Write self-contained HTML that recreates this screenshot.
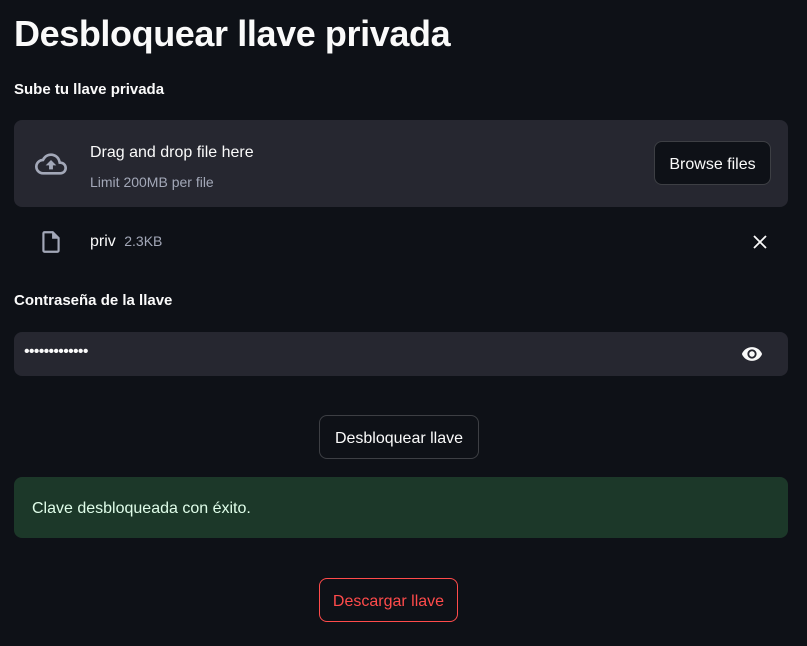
<!DOCTYPE html>
<html><head><meta charset="utf-8"><style>
*{box-sizing:border-box;margin:0;padding:0}
body{width:807px;height:646px;background:#0e1117;color:#fafafa;font-family:"Liberation Sans",sans-serif;position:relative;overflow:hidden}
.abs{position:absolute}
h1{position:absolute;left:14px;top:13px;font-size:36px;font-weight:700;letter-spacing:-0.4px}
.lbl{position:absolute;left:14px;font-size:15px;font-weight:700}
.drop{left:14px;top:120px;width:774px;height:87px;background:#262730;border-radius:8px}
.btn{position:absolute;border:1px solid rgba(250,250,250,0.2);border-radius:8px;background:#0e1117;color:#fafafa;font-size:16px;display:flex;align-items:center;justify-content:center;padding-top:3px}
</style></head><body>
<h1>Desbloquear llave privada</h1>
<div class="lbl" style="top:81px">Sube tu llave privada</div>
<div class="abs drop"></div>
<svg class="abs" style="left:31px;top:148px" width="40" height="32" viewBox="0 0 24 24"><path d="M19.35 10.04A7.49 7.49 0 0 0 12 4C9.11 4 6.6 5.64 5.35 8.04A5.994 5.994 0 0 0 0 14c0 3.31 2.69 6 6 6h13c2.76 0 5-2.24 5-5 0-2.640-2.05-4.78-4.65-4.96zM19 18H6c-2.21 0-4-1.79-4-4 0-2.05 1.53-3.76 3.56-3.970l1.07-.11.5-.95A5.47 5.47 0 0 1 12 6c2.62 0 4.88 1.86 5.39 4.43l.3 1.5 1.53.11A2.98 2.98 0 0 1 22 15c0 1.65-1.35 3-3 3zM8 13h2.55v3h2.9v-3H16l-4-4z" fill="#a3a8b8"/></svg>
<div class="abs" style="left:90px;top:144px;font-size:16px">Drag and drop file here</div>
<div class="abs" style="left:90px;top:174px;font-size:14px;color:#a3a8b8">Limit 200MB per file</div>
<div class="btn" style="left:654px;top:141px;width:117px;height:44px">Browse files</div>
<svg class="abs" style="left:38px;top:228px" width="26" height="28" viewBox="0 0 24 24"><path d="M14 2H6c-1.1 0-2 .9-2 2v16c0 1.1.9 2 2 2h12c1.1 0 2-.9 2-2V8l-6-6zM6 20V4h7v5h5v11H6z" fill="#a3a8b8"/></svg>
<div class="abs" style="left:90px;top:233px;font-size:16px">priv <span style="font-size:14px;color:#a3a8b8;margin-left:4px">2.3KB</span></div>
<svg class="abs" style="left:752px;top:234px" width="16" height="16" viewBox="0 0 16 16"><path d="M2 2L14 14M14 2L2 14" stroke="#fafafa" stroke-width="1.8"/></svg>
<div class="lbl" style="top:292px">Contraseña de la llave</div>
<div class="abs" style="left:14px;top:332px;width:774px;height:44px;background:#262730;border-radius:8px"></div>
<div class="abs" style="left:24px;top:343px;font-size:16px;letter-spacing:-0.7px">•••••••••••••</div>
<svg class="abs" style="left:741px;top:343px" width="22" height="22" viewBox="0 0 24 24"><path d="M12 4.5C7 4.5 2.73 7.61 1 12c1.73 4.39 6 7.5 11 7.5s9.27-3.11 11-7.5c-1.730-4.39-6-7.5-11-7.5zM12 17c-2.76 0-5-2.24-5-5s2.24-5 5-5 5 2.24 5 5-2.24 5-5 5zm0-8c-1.66 0-3 1.34-3 3s1.34 3 3 3 3-1.34 3-3-1.34-3-3-3z" fill="#fafafa"/></svg>
<div class="btn" style="left:319px;top:415px;width:160px;height:44px">Desbloquear llave</div>
<div class="abs" style="left:14px;top:477px;width:774px;height:61px;background:#1c3829;border-radius:8px"></div>
<div class="abs" style="left:32px;top:500px;font-size:16px;color:#dffde9">Clave desbloqueada con éxito.</div>
<div class="btn" style="left:319px;top:578px;width:139px;height:44px;border-color:#ff4b4b;color:#ff4b4b">Descargar llave</div>
</body></html>
